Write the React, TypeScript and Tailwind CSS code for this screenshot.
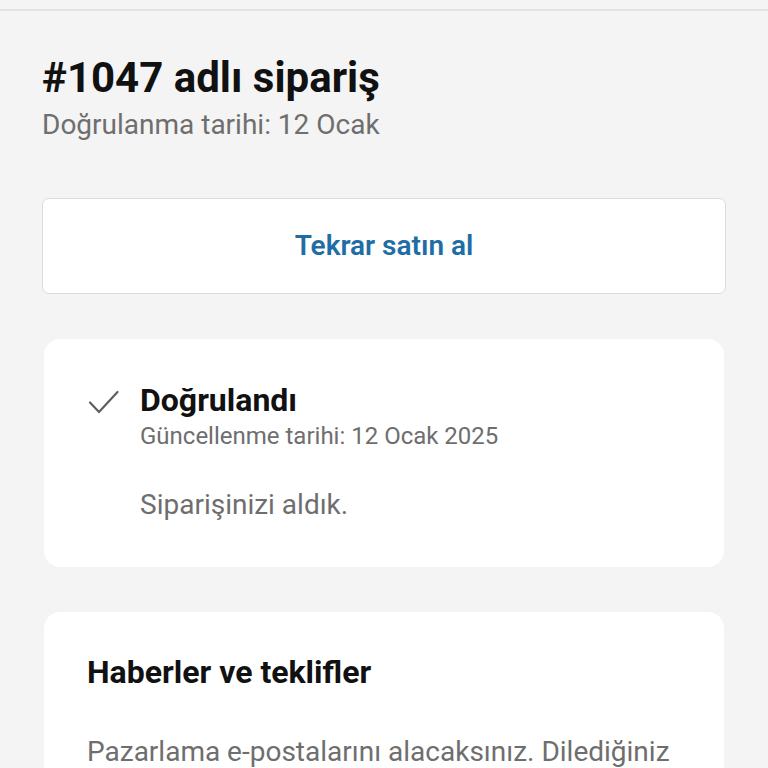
const CheckIcon = () => (
  <svg width="32" height="26" viewBox="0 0 32 26" fill="none" className="shrink-0 mt-[8px]">
    <path d="M2 13.5 L11 23 L29.5 3" stroke="#5f5f5f" strokeWidth="2.2" strokeLinecap="round" strokeLinejoin="round" />
  </svg>
)

export default function App() {
  return (
    <div className="min-h-screen w-full bg-[#f4f4f4] font-['Roboto',sans-serif] overflow-hidden">
      <div className="h-[11px] border-b-2 border-[#e2e2e2]" />

      <main className="px-[42px] pt-[44px]">
        <h1 className="text-[42px] leading-[46px] font-bold text-[#111]">#1047 adlı sipariş</h1>
        <p className="mt-[7px] text-[28px] leading-[34px] text-[#6e6e6e]">Doğrulanma tarihi: 12 Ocak</p>

        <button className="mt-[56px] w-full h-[96px] bg-white border border-[#dcdcdc] rounded-[7px] text-[28px] font-semibold text-[#1e6ea5]">
          Tekrar satın al
        </button>

        <section className="mt-[45px] mx-[2px] bg-white rounded-[16px] px-[44px] pt-[42px] pb-[44px]">
          <div className="flex gap-[20px]">
            <CheckIcon />
            <div>
              <h2 className="text-[32px] leading-[38px] font-bold text-[#111]">Doğrulandı</h2>
              <p className="text-[24px] leading-[34px] text-[#6e6e6e]">Güncellenme tarihi: 12 Ocak 2025</p>
              <p className="mt-[34px] text-[28px] leading-[36px] text-[#6e6e6e]">Siparişinizi aldık.</p>
            </div>
          </div>
        </section>

        <section className="mt-[45px] mx-[2px] bg-white rounded-[16px] px-[43px] pt-[41px] pb-[44px]">
          <h2 className="text-[32px] leading-[38px] font-bold text-[#111]">Haberler ve teklifler</h2>
          <p className="mt-[43px] text-[28px] leading-[36px] text-[#6e6e6e]">
            Pazarlama e-postalarını alacaksınız. Dilediğiniz zaman abonelikten çıkabilirsiniz.
          </p>
        </section>
      </main>
    </div>
  )
}
